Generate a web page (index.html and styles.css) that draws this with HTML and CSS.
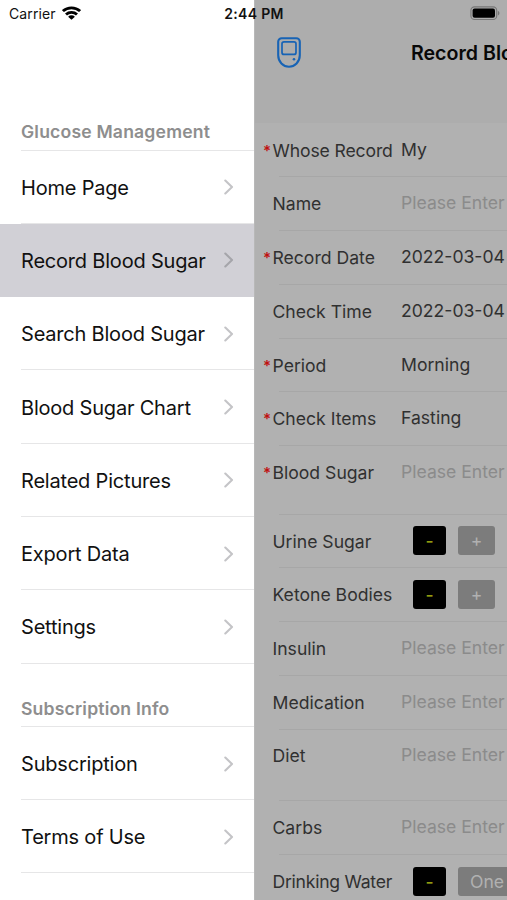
FILE: index.html
```html
<!DOCTYPE html>
<html lang="en">
<head>
<meta charset="utf-8">
<title>Record Blood Sugar</title>
<link rel="stylesheet" href="styles.css">
</head>
<body>
<svg class="defs" width="0" height="0" aria-hidden="true">
  <symbol id="chevron" viewBox="0 0 10 16"><path d="M1.3 1.6 8 8l-6.7 6.4" fill="none" stroke="currentColor" stroke-width="2.1" stroke-linecap="round" stroke-linejoin="round"/></symbol>
</svg>
<div class="screen">
  <header class="status">
    <div class="carrier"><span>Carrier</span>
      <svg class="wifi" viewBox="0 0 18 14" width="19" height="14" preserveAspectRatio="none"><g fill="none" stroke="#000" stroke-width="2.7"><path d="M.9 5.1a11.6 11.6 0 0 1 16.2 0"/><path d="M3.8 8.500a7.500 7.500 0 0 1 10.400 0"/></g><path d="M9 13.700 5.800 10.700a4.400 4.400 0 0 1 6.400 0z"/></svg>
    </div>
    <time class="clock">2:44 PM</time>
    <svg class="battery" viewBox="0 0 30 15" width="30" height="15"><rect x=".9" y=".9" width="25.8" height="12.6" rx="3.6" fill="none" stroke="#777" stroke-width="1.1"/><rect x="2.6" y="2.6" width="22.4" height="9.2" rx="2" /><path d="M27.9 5v4.4c1-.4 1.5-1.2 1.5-2.2S28.900 5.400 27.900 5z" fill="#777"/></svg>
  </header>

  <nav class="menu">
    <h2 class="group first">Glucose Management</h2>
    <a class="item"><span>Home Page</span><svg class="chev"><use href="#chevron"/></svg></a>
    <a class="item active"><span>Record Blood Sugar</span><svg class="chev"><use href="#chevron"/></svg></a>
    <a class="item"><span>Search Blood Sugar</span><svg class="chev"><use href="#chevron"/></svg></a>
    <a class="item"><span>Blood Sugar Chart</span><svg class="chev"><use href="#chevron"/></svg></a>
    <a class="item"><span>Related Pictures</span><svg class="chev"><use href="#chevron"/></svg></a>
    <a class="item"><span>Export Data</span><svg class="chev"><use href="#chevron"/></svg></a>
    <a class="item"><span>Settings</span><svg class="chev"><use href="#chevron"/></svg></a>
    <h2 class="group">Subscription Info</h2>
    <a class="item"><span>Subscription</span><svg class="chev"><use href="#chevron"/></svg></a>
    <a class="item"><span>Terms of Use</span><svg class="chev"><use href="#chevron"/></svg></a>
  </nav>

  <main class="page">
    <div class="navbar">
      <svg class="meter" viewBox="0 0 24 31" width="24" height="31" fill="none" stroke="#1763b5"><path d="M4.700 1.200h14.600a3.500 3.500 0 0 1 3.500 3.500v13.500c0 6.600-5 11.500-10.800 11.500S1.200 24.800 1.200 18.200V4.700a3.500 3.500 0 0 1 3.500-3.500z" stroke-width="2.100"/><rect x="5" y="4.800" width="14" height="12.600" rx="2" stroke-width="1.700"/><circle cx="17" cy="22.300" r="1.300" fill="#1763b5" stroke="none"/></svg>
      <h1>Record Blood Sugar</h1>
    </div>
    <form class="form">
      <div class="row head"><i>*</i><label>Whose Record</label><b>My</b></div>
      <div class="row"><i></i><label>Name</label><b class="hint">Please Enter</b></div>
      <div class="row"><i>*</i><label>Record Date</label><b class="date">2022-03-04</b></div>
      <div class="row"><i></i><label>Check Time</label><b class="date">2022-03-04</b></div>
      <div class="row"><i>*</i><label>Period</label><b>Morning</b></div>
      <div class="row"><i>*</i><label>Check Items</label><b>Fasting</b></div>
      <div class="row sugar"><i>*</i><label>Blood Sugar</label><b class="hint">Please Enter</b></div>
      <div class="row"><i></i><label>Urine Sugar</label><div class="choices"><span class="chip on">-</span><span class="chip">+</span></div></div>
      <div class="row"><i></i><label class="tight">Ketone Bodies</label><div class="choices"><span class="chip on">-</span><span class="chip">+</span></div></div>
      <div class="row"><i></i><label>Insulin</label><b class="hint">Please Enter</b></div>
      <div class="row"><i></i><label>Medication</label><b class="hint">Please Enter</b></div>
      <div class="row diet"><i></i><label>Diet</label><b class="hint">Please Enter</b></div>
      <div class="row"><i></i><label>Carbs</label><b class="hint">Please Enter</b></div>
      <div class="row"><i></i><label class="water">Drinking Water</label><div class="choices"><span class="chip on">-</span><span class="chip word">One</span></div></div>
    </form>
  </main>
</div>
</body>
</html>
```
FILE: styles.css
```css
* { box-sizing: border-box; }
html, body { margin: 0; height: 900px; overflow: hidden; }
body { font-family: Inter, "Liberation Sans", sans-serif; background: #fff; color: #111; }
.defs { position: absolute; }
.screen { position: relative; display: grid; grid-template-columns: 254px 253px; height: 900px; overflow: hidden; }

.status {
  position: absolute; inset: 0 0 auto 0; z-index: 2; height: 27px;
  display: grid; grid-template-columns: 1fr auto 1fr; align-items: center;
  padding: 0 7px 0 9px; font-size: 14px; color: #111;
}
.carrier { display: flex; align-items: center; gap: 6px; }
.carrier span { letter-spacing: 0.1px; }
.wifi { margin-top: -2px; }
.clock { font-weight: 600; letter-spacing: 0.3px; margin-left: -1px; }
.battery { justify-self: end; }

.menu { background: #fff; overflow: hidden; }
.group {
  height: 63.3px; margin: 0 0 0 21px; padding: 34px 0 0; font-size: 17.6px; line-height: 22px;
  font-weight: 600; letter-spacing: 0.18px; color: #8e8e8e; border-bottom: 1px solid #e6e6e7;
}
.group.first { height: 150.5px; padding-top: 121px; }
.item {
  height: 73.3px; display: flex; align-items: center; justify-content: space-between;
  padding: 1px 20px 0 0; margin-left: 21px; border-bottom: 1px solid #e6e6e7;
  font-size: 20px; letter-spacing: -0.2px; white-space: nowrap;
}
.item span { padding-top: 1px; }
.item.active { margin-left: 0; padding-left: 21px; background: #d1d0d6; border-color: #d1d0d6; }
.chev { width: 10px; height: 16px; color: #c4c4c7; }
.active .chev { color: #a5a5aa; }

.page { background: #b1b1b1; overflow: hidden; border-left: 1px solid #b8b8b8; }
.navbar { height: 123px; background: #adadad; display: flex; align-items: flex-start; gap: 110px; padding: 37px 0 0 22px; }
.meter { flex: none; }
.navbar h1 { margin: 4px 0 0; font-size: 19.6px; line-height: 24px; font-weight: 600; color: #080808; white-space: nowrap; }
.row { height: 53.8px; display: grid; grid-template-columns: 10px 128px 1fr; grid-template-rows: 53px; padding-left: 8px; align-items: center; font-size: 17.6px; color: #303030; white-space: nowrap; position: relative; }
.row::after { content: ""; position: absolute; left: 24px; right: 0; bottom: 0; height: 1px; background: #a7a7a7; }
.row.head { height: 54.2px; grid-template-rows: 55px; }
.row.sugar { height: 68.4px; }
.row.diet { height: 71.6px; grid-template-rows: 52px; }
.row i { font-style: normal; color: #c01010; font-size: 15px; font-weight: 600; }
.row label { margin-left: -0.5px; }
.row.head label { letter-spacing: -0.13px; }
.row .water { letter-spacing: -0.25px; }
.row b { font-weight: 400; padding-bottom: 2px; }
.row .hint { color: #8b8b8b; }
.choices { display: flex; gap: 12px; padding: 0 0 1px 12px; }
.chip { width: 37px; height: 29px; border-radius: 3px; background: #7c7c7c; color: #b1b1b1; display: flex; align-items: center; justify-content: center; }
.chip.on { width: 33px; background: #000; color: #929c10; font-weight: 500; }
.chip.word { width: 58px; }
```
